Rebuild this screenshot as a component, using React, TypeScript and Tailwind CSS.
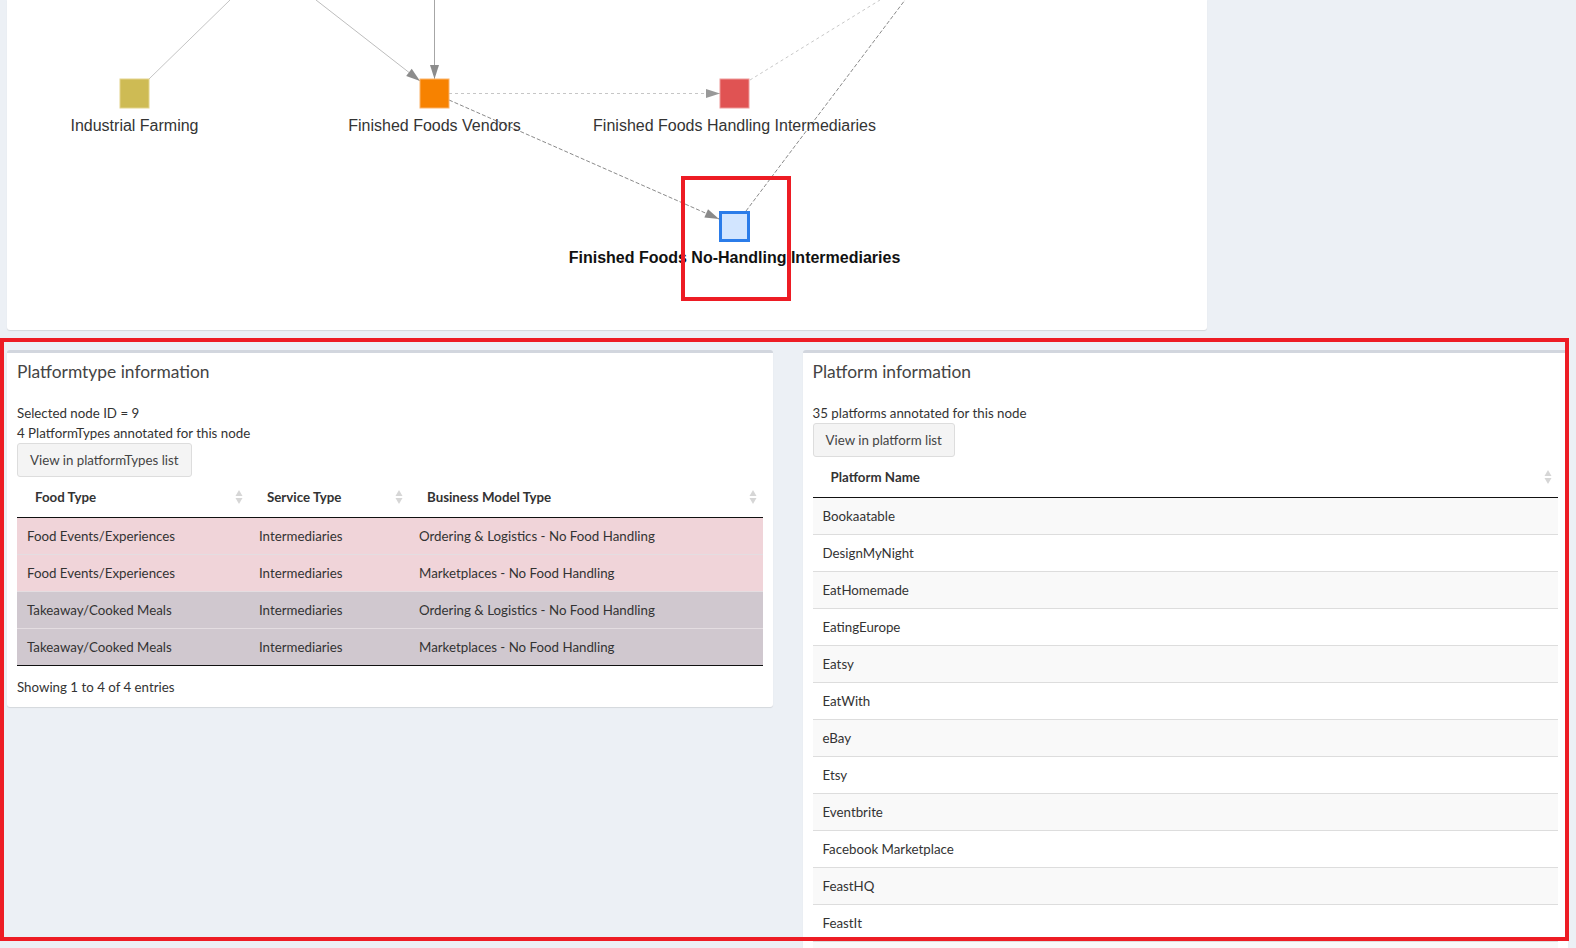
import React from 'react'

type Edge = {
  x1: number
  y1: number
  x2: number
  y2: number
  color: string
  dash?: string
  arrow?: string
}

// graph edges, page coordinates (viewBox starts at the card's left edge)
const edges: Edge[] = [
  { x1: 149, y1: 79, x2: 230, y2: 0, color: '#c4c4c4' },
  { x1: 316, y1: 0, x2: 420, y2: 81, color: '#bdbdbd', arrow: '#8c8c8c' },
  { x1: 434.5, y1: 0, x2: 434.5, y2: 79, color: '#a6a6a6', arrow: '#8c8c8c' },
  { x1: 449, y1: 93.5, x2: 720, y2: 93.5, color: '#c6c6c6', dash: '3 3', arrow: '#999999' },
  { x1: 449, y1: 100, x2: 719, y2: 219, color: '#8a8a8a', dash: '4 2', arrow: '#8a8a8a' },
  { x1: 750, y1: 80, x2: 880, y2: 0, color: '#c8c8c8', dash: '3 3' },
  { x1: 746, y1: 211, x2: 905, y2: 0, color: '#8a8a8a', dash: '4 2' },
]

function arrowPoints(e: Edge, len = 14, w = 9) {
  const dx = e.x2 - e.x1
  const dy = e.y2 - e.y1
  const n = Math.hypot(dx, dy)
  const ux = dx / n
  const uy = dy / n
  const bx = e.x2 - ux * len
  const by = e.y2 - uy * len
  const px = -uy * (w / 2)
  const py = ux * (w / 2)
  return `${e.x2},${e.y2} ${bx + px},${by + py} ${bx - px},${by - py}`
}

const nodes = [
  { x: 120, y: 79, fill: '#cebb54', stroke: '#e3d48c', label: 'Industrial Farming' },
  { x: 420, y: 79, fill: '#f78200', stroke: '#fbb36a', label: 'Finished Foods Vendors' },
  { x: 720, y: 79, fill: '#e05353', stroke: '#ee9a9a', label: 'Finished Foods Handling Intermediaries' },
]

function Graph() {
  return (
    <svg width={1200} height={330} viewBox="7 0 1200 330" className="block">
      {edges.map((e, i) => (
        <g key={i}>
          <line
            x1={e.x1}
            y1={e.y1}
            x2={e.x2}
            y2={e.y2}
            stroke={e.color}
            strokeWidth={1}
            strokeDasharray={e.dash}
          />
          {e.arrow && <polygon points={arrowPoints(e)} fill={e.arrow} />}
        </g>
      ))}
      {nodes.map((n) => (
        <g key={n.label}>
          <rect x={n.x} y={n.y} width={29} height={29} fill={n.fill} stroke={n.stroke} strokeWidth={1} />
          <text
            x={n.x + 14.5}
            y={130.5}
            textAnchor="middle"
            fontFamily="'Liberation Sans', Arial, sans-serif"
            fontSize={16}
            fill="#343434"
          >
            {n.label}
          </text>
        </g>
      ))}
      {/* selected node */}
      <rect x={720.5} y={212.5} width={28} height={28} fill="#d2e5ff" stroke="#2b7ce9" strokeWidth={3} />
      <text
        x={734.5}
        y={263}
        textAnchor="middle"
        fontFamily="'Liberation Sans', Arial, sans-serif"
        fontSize={16}
        fontWeight={700}
        fill="#111111"
      >
        Finished Foods No-Handling Intermediaries
      </text>
    </svg>
  )
}

function SortIcon() {
  return (
    <svg width="8" height="16" viewBox="0 0 8 16" className="shrink-0">
      <polygon points="4,1 7.5,7 0.5,7" fill="#d6d6d6" />
      <polygon points="4,15 7.5,9 0.5,9" fill="#d6d6d6" />
    </svg>
  )
}

function Th({ children }: { children: React.ReactNode }) {
  return (
    <th className="p-0 text-left font-bold border-b border-[#111]">
      <div className="flex items-center justify-between pl-[18px] pr-[6px] py-[10px] leading-[20px]">
        <span>{children}</span>
        <SortIcon />
      </div>
    </th>
  )
}

function Box({ title, children }: { title: string; children: React.ReactNode }) {
  return (
    <div className="flex-1 bg-white border-t-[3px] border-[#d2d6de] rounded-[3px] shadow-[0_1px_1px_rgba(0,0,0,0.1)]">
      <div className="px-[10px] pt-[10px] pb-[10px]">
        <h3 className="text-[17.4px] leading-[17px] text-[#444]">{title}</h3>
      </div>
      <div className="px-[10px] pt-[13px] pb-[10px]">{children}</div>
    </div>
  )
}

function Button({ children }: { children: React.ReactNode }) {
  return (
    <button className="h-[34px] px-[12px] bg-[#f4f4f4] border border-[#ddd] rounded-[3px] text-[#444] leading-[20px]">
      {children}
    </button>
  )
}

const typeRows = [
  { food: 'Food Events/Experiences', service: 'Intermediaries', model: 'Ordering & Logistics - No Food Handling', bg: 'bg-[#f0d4d9]' },
  { food: 'Food Events/Experiences', service: 'Intermediaries', model: 'Marketplaces - No Food Handling', bg: 'bg-[#f0d4d9]' },
  { food: 'Takeaway/Cooked Meals', service: 'Intermediaries', model: 'Ordering & Logistics - No Food Handling', bg: 'bg-[#d0c8cf]' },
  { food: 'Takeaway/Cooked Meals', service: 'Intermediaries', model: 'Marketplaces - No Food Handling', bg: 'bg-[#d0c8cf]' },
]

const platforms = [
  'Bookaatable',
  'DesignMyNight',
  'EatHomemade',
  'EatingEurope',
  'Eatsy',
  'EatWith',
  'eBay',
  'Etsy',
  'Eventbrite',
  'Facebook Marketplace',
  'FeastHQ',
  'FeastIt',
  '\u00a0',
]

export default function App() {
  return (
    <div
      className="relative w-[1576px] h-[948px] overflow-hidden bg-[#ecf0f5] text-[13.3px] text-[#333]"
      style={{ fontFamily: 'Lato, "Open Sans", sans-serif' }}
    >
      <div className="ml-[7px] w-[1200px] h-[330px] bg-white rounded-b-[3px] shadow-[0_1px_1px_rgba(0,0,0,0.1)]">
        <Graph />
      </div>

      <div className="flex items-start gap-[30px] pl-[7px] pr-[8px] mt-[20px]">
        <Box title="Platformtype information">
          <div className="leading-[20px]">Selected node ID = 9</div>
          <div className="leading-[20px]">4 PlatformTypes annotated for this node</div>
          <Button>View in platformTypes list</Button>
          <table className="w-full table-fixed border-collapse">
            <colgroup>
              <col className="w-[232px]" />
              <col className="w-[160px]" />
              <col />
            </colgroup>
            <thead>
              <tr>
                <Th>Food Type</Th>
                <Th>Service Type</Th>
                <Th>Business Model Type</Th>
              </tr>
            </thead>
            <tbody className="border-b border-[#111]">
              {typeRows.map((r, i) => (
                <tr key={i} className={`${r.bg} ${i > 0 ? 'border-t border-[#e4dde1]' : ''}`}>
                  <td className="px-[10px] py-[8px] leading-[20px]">{r.food}</td>
                  <td className="px-[10px] py-[8px] leading-[20px]">{r.service}</td>
                  <td className="px-[10px] py-[8px] leading-[20px]">{r.model}</td>
                </tr>
              ))}
            </tbody>
          </table>
          <div className="pt-[11px] leading-[20px]">Showing 1 to 4 of 4 entries</div>
        </Box>

        <Box title="Platform information">
          <div className="leading-[20px]">35 platforms annotated for this node</div>
          <Button>View in platform list</Button>
          <table className="w-full border-collapse">
            <thead>
              <tr>
                <Th>Platform Name</Th>
              </tr>
            </thead>
            <tbody>
              {platforms.map((p, i) => (
                <tr
                  key={i}
                  className={`${i % 2 === 0 ? 'bg-[#f9f9f9]' : 'bg-white'} ${i > 0 ? 'border-t border-[#ddd]' : ''}`}
                >
                  <td className="px-[10px] py-[8px] leading-[20px]">{p}</td>
                </tr>
              ))}
            </tbody>
          </table>
        </Box>
      </div>

      {/* annotation boxes drawn over the screenshot */}
      <div className="pointer-events-none absolute left-[681px] top-[176px] w-[110px] h-[125px] border-[4px] border-[#ed1c24]" />
      <div className="pointer-events-none absolute left-0 top-[338px] w-[1569px] h-[603px] border-[4px] border-[#ed1c24]" />
    </div>
  )
}
